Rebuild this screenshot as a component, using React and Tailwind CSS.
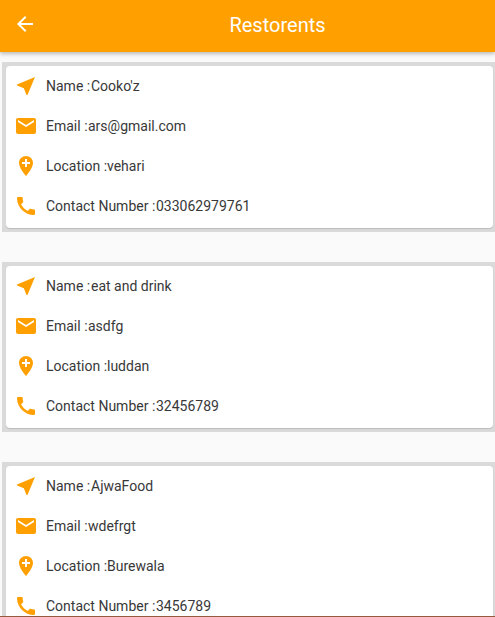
const icons = {
  near: 'M21 3L3 10.53v.98l6.84 2.65L12.48 21h.98L21 3z',
  mail: 'M20 4H4c-1.1 0-1.99.9-1.99 2L2 18c0 1.1.9 2 2 2h16c1.1 0 2-.9 2-2V6c0-1.1-.9-2-2-2zm0 4l-8 5-8-5V6l8 5 8-5v2z',
  place: 'M12 2C8.14 2 5 5.14 5 9c0 5.25 7 13 7 13s7-7.75 7-13c0-3.86-3.14-7-7-7zm4 8h-3v3h-2v-3H8V8h3V5h2v3h3v2z',
  phone: 'M20.01 15.38c-1.23 0-2.42-.2-3.53-.56-.35-.12-.74-.03-1.01.24l-1.57 1.97c-2.83-1.35-5.48-3.9-6.89-6.83l1.95-1.66c.27-.28.35-.67.24-1.02-.37-1.11-.56-2.3-.56-3.53 0-.54-.45-.99-.99-.99H4.19C3.65 3 3 3.24 3 3.99 3 13.28 10.73 21 20.01 21c.71 0 .99-.63.99-1.18v-3.45c0-.54-.45-.99-.99-.99z',
  back: 'M20 11H7.83l5.59-5.59L12 4l-8 8 8 8 1.41-1.41L7.83 13H20v-2z',
};

const restaurants = [
  { name: "Cooko'z", email: 'ars@gmail.com', location: 'vehari', phone: '033062979761' },
  { name: 'eat and drink', email: 'asdfg', location: 'luddan', phone: '32456789' },
  { name: 'AjwaFood', email: 'wdefrgt', location: 'Burewala', phone: '3456789' },
];

function Icon({ name }) {
  return (
    <svg viewBox="0 0 24 24" className="size-6 shrink-0 fill-current">
      <path d={icons[name]} />
    </svg>
  );
}

function Row({ icon, label, value, labelWidth }) {
  return (
    <div className="flex h-10 items-center gap-2 pl-2">
      <span className="text-[#ffa000]">
        <Icon name={icon} />
      </span>
      <span className="flex whitespace-pre text-sm text-[#383838]">
        <span className={labelWidth}>{label} :</span>
        <span>{value}</span>
      </span>
    </div>
  );
}

function Card({ item }) {
  return (
    <section className="h-[170px] shrink-0 bg-[#dadada] py-1 pl-1 pr-0.5">
      <div className="h-[162px] rounded bg-white shadow-[0_1px_1px_rgba(0,0,0,0.14)]">
        <Row icon="near" label="Name" value={item.name} labelWidth="w-[45px]" />
        <Row icon="mail" label="Email" value={item.email} labelWidth="w-[42px]" />
        <Row icon="place" label="Location" value={item.location} labelWidth="w-[61px]" />
        <Row icon="phone" label="Contact Number" value={item.phone} labelWidth="w-[110px]" />
      </div>
    </section>
  );
}

export default function App() {
  return (
    <div className="flex h-[617px] w-[495px] flex-col overflow-hidden border-b border-[#965a3e] bg-[#fafafa] font-['Roboto',sans-serif]">
      <header className="z-10 flex h-[52px] shrink-0 items-center bg-[#ffa000] pb-1 pl-[13px] text-white shadow-[0_2px_4px_rgba(0,0,0,0.25)]">
        <Icon name="back" />
        <h1 className="flex-1 pl-[23px] pt-0.5 text-center text-xl">Restorents</h1>
      </header>
      <main className="flex min-h-0 flex-1 flex-col gap-[30px] overflow-hidden pl-0.5 pt-2.5">
        {restaurants.map((item) => (
          <Card key={item.name} item={item} />
        ))}
      </main>
    </div>
  );
}
